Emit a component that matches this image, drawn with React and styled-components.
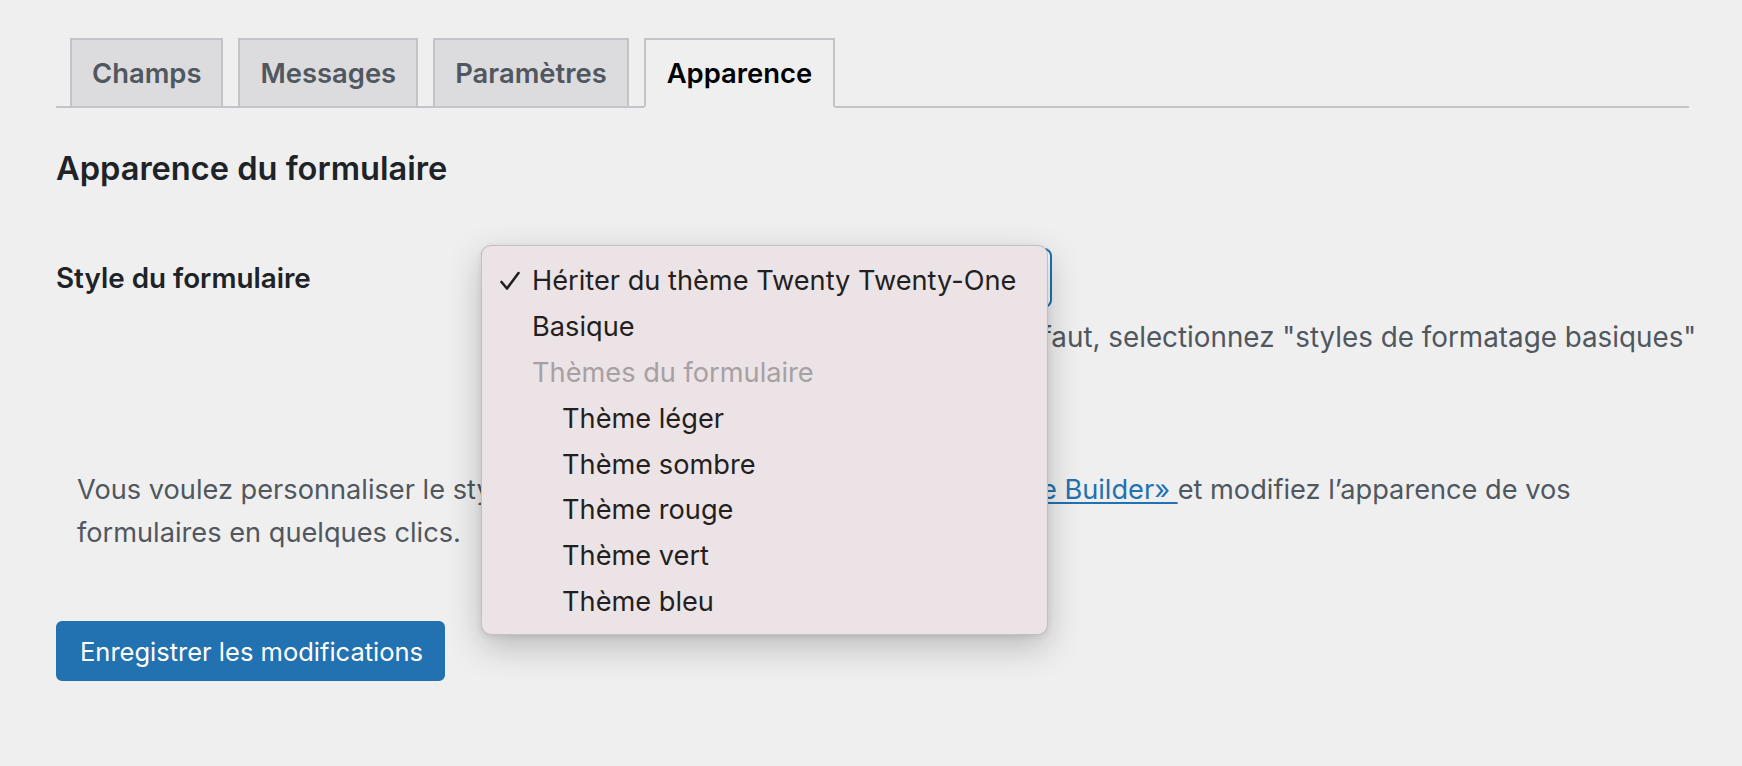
import React from 'react';
import styled, { createGlobalStyle } from 'styled-components';

const GlobalStyle = createGlobalStyle`
  html, body {
    margin: 0;
    padding: 0;
    background: #efeff0;
  }

  body {
    font-family: Inter, 'Liberation Sans', sans-serif;
    color: #1d2327;
  }
`

const Page = styled.div`
  padding: 38px 53px 0 56px;
  min-height: 728px;
`

const TabBar = styled.nav`
  display: flex;
  gap: 15px;
  padding-left: 14px;
  border-bottom: 2px solid #c3c4c7;
`

const Tab = styled.a`
  display: block;
  margin-bottom: -2px;
  padding: 10px ${p => (p.$active ? 21 : 20)}px;
  font-size: 27.4px;
  font-weight: 600;
  line-height: 46px;
  color: ${p => (p.$active ? '#000' : '#50575e')};
  background: ${p => (p.$active ? '#efeff0' : '#dcdcde')};
  border: 2px solid #c3c4c7;
  border-bottom-color: ${p => (p.$active ? '#efeff0' : '#c3c4c7')};
  cursor: pointer;
`

const Title = styled.h2`
  margin: 39px 0 0;
  font-size: 32.6px;
  font-weight: 600;
  line-height: 42px;
  color: #1d2327;
`

const FieldRow = styled.div`
  display: grid;
  grid-template-columns: 425px 1fr;
  margin-top: 59px;
`

const FieldLabel = styled.label`
  padding-top: 10px;
  font-size: 27.8px;
  font-weight: 600;
  line-height: 40px;
  color: #1d2327;
`

const FieldBody = styled.div`
  display: flex;
  flex-direction: column;
  align-items: flex-start;
`

const SelectWrap = styled.div`
  position: relative;
`

const SelectBox = styled.div`
  box-sizing: border-box;
  display: flex;
  align-items: center;
  width: 571px;
  height: 60px;
  padding: 0 16px;
  font-size: 27px;
  color: #2c3338;
  background: #fff;
  border: 2px solid #2271b1;
  border-radius: 8px;
`

const Menu = styled.ul`
  position: absolute;
  top: -3px;
  left: 0;
  box-sizing: border-box;
  width: 567px;
  margin: 0;
  padding: 12px 0 9px;
  list-style: none;
  background: #ece3e6;
  border: 1px solid rgba(0, 0, 0, 0.16);
  border-radius: 10px;
  box-shadow: 0 12px 34px rgba(0, 0, 0, 0.22), 0 2px 6px rgba(0, 0, 0, 0.08);
`

const MenuItem = styled.li`
  position: relative;
  height: 45.9px;
  padding-left: ${p => (p.$indent ? 80 : 50)}px;
  font-size: 27.2px;
  line-height: 45.9px;
  white-space: nowrap;
  color: ${p => (p.$group ? '#a7a0a3' : '#231f21')};
`

const Check = styled.svg`
  position: absolute;
  left: 17px;
  top: 12px;
  width: 22px;
  height: 22px;
`

const Description = styled.p`
  margin: 10px 0 0;
  font-size: 27.8px;
  line-height: 38px;
  color: #50575e;
  white-space: nowrap;
`

const Notice = styled.p`
  margin: 112px 0 0;
  padding: 0 22px 0 21px;
  font-size: 27.2px;
  line-height: 43px;
  color: #50575e;
`

const Link = styled.a`
  color: #2271b1;
  text-decoration: underline;
  text-underline-offset: 3px;
`

const SaveButton = styled.button`
  display: block;
  height: 60px;
  margin-top: 67px;
  padding: 0 20px 0 22px;
  font-family: inherit;
  font-size: 25.5px;
  color: #fff;
  background: #2271b1;
  border: 2px solid #2271b1;
  border-radius: 6px;
  cursor: pointer;
`

const options = [
  { label: 'Basique' },
  { label: 'Thèmes du formulaire', group: true },
  { label: 'Thème léger', indent: true },
  { label: 'Thème sombre', indent: true },
  { label: 'Thème rouge', indent: true },
  { label: 'Thème vert', indent: true },
  { label: 'Thème bleu', indent: true },
]

const tabs = ['Champs', 'Messages', 'Paramètres', 'Apparence']

const App = () => {
  return (
    <Page>
      <GlobalStyle />
      <TabBar>
        {tabs.map(t => (
          <Tab key={t} $active={t === 'Apparence'}>{t}</Tab>
        ))}
      </TabBar>

      <Title>Apparence du formulaire</Title>

      <FieldRow>
        <FieldLabel>Style du formulaire</FieldLabel>
        <FieldBody>
          <SelectWrap>
            <SelectBox>Hériter du thème Twenty Twenty-One</SelectBox>
            <Menu>
              <MenuItem>
                <Check viewBox='0 0 22 22' fill='none' stroke='#231f21' strokeWidth='2.6' strokeLinecap='round' strokeLinejoin='round'>
                  <path d='M2.5 12 L8 18.5 L19.5 3' />
                </Check>
                Hériter du thème Twenty Twenty-One
              </MenuItem>
              {options.map(o => (
                <MenuItem key={o.label} $indent={o.indent} $group={o.group}>{o.label}</MenuItem>
              ))}
            </Menu>
          </SelectWrap>
          <Description>Pour désactiver les styles du thème par défaut, selectionnez "styles de formatage basiques"</Description>
        </FieldBody>
      </FieldRow>

      <Notice>
        Vous voulez personnaliser le style de vos formulaires ? Essayez notre <Link href='#'>«Style Builder» </Link> et modifiez l’apparence de vos formulaires en quelques clics.
      </Notice>

      <SaveButton>Enregistrer les modifications</SaveButton>
    </Page>
  );
}

export default App;
